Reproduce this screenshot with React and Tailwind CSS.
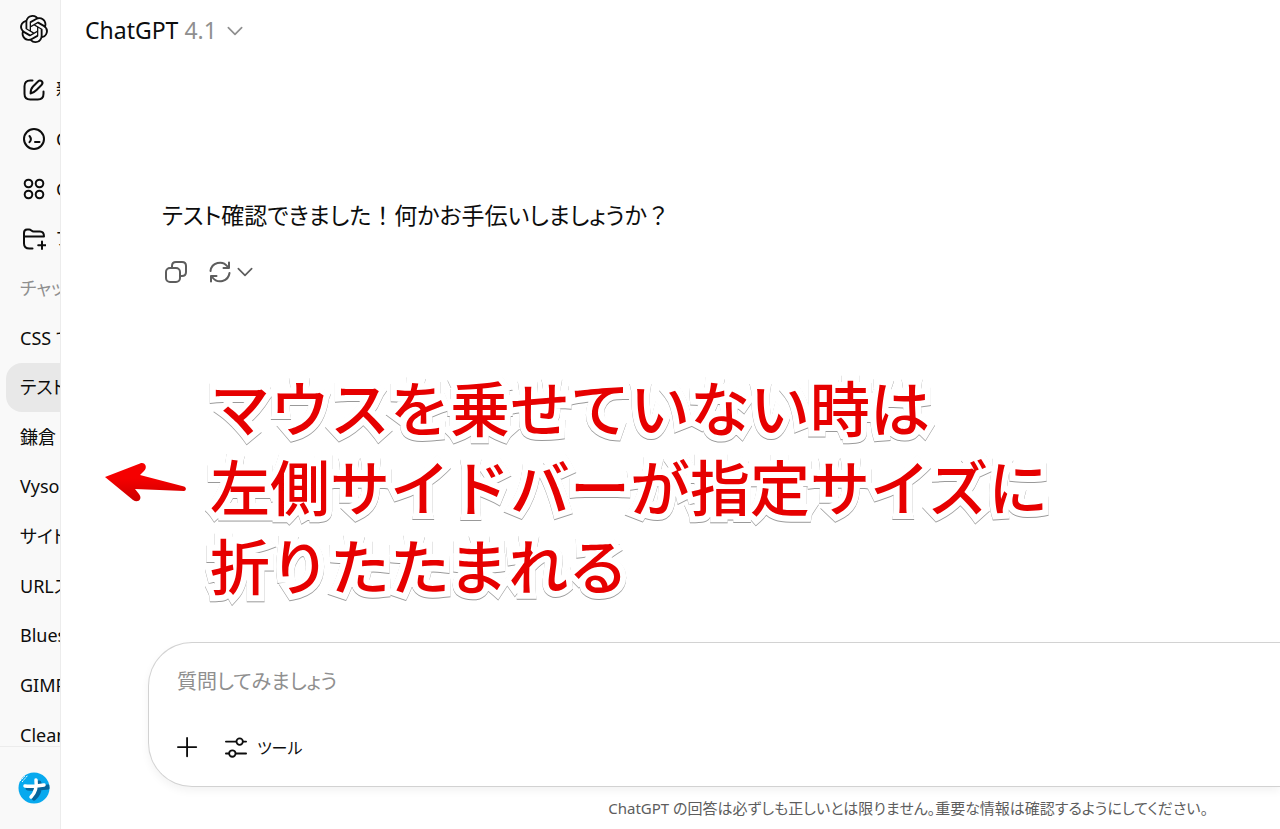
import React from "react";
import { SiOpenai } from "react-icons/si";

const navItems = [
  { label: "新しいチャット", icon: EditIcon },
  { label: "Codex", icon: CodexIcon },
  { label: "GPT", icon: AppsIcon },
  { label: "プロジェクト", icon: FolderPlusIcon },
];

const chats = [
  { title: "CSS で" },
  { title: "テスト確認", active: true },
  { title: "鎌倉 観光" },
  { title: "Vysor" },
  { title: "サイドバー" },
  { title: "URLスキーム" },
  { title: "Bluesky" },
  { title: "GIMP" },
  { title: "Cleaner" },
];

function Icon({ className = "size-6", strokeWidth = 2, children }) {
  return (
    <svg
      viewBox="0 0 24 24"
      fill="none"
      stroke="currentColor"
      strokeWidth={strokeWidth}
      strokeLinecap="round"
      strokeLinejoin="round"
      className={`shrink-0 ${className}`}
      aria-hidden="true"
    >
      {children}
    </svg>
  );
}

function EditIcon() {
  return (
    <Icon>
      <path d="M10.5 2.5H8.2C4.4 2.5 2.5 4.4 2.5 8.2v7.6c0 3.8 1.9 5.7 5.7 5.7h7.6c3.8 0 5.7-1.9 5.7-5.7V13.5" />
      <path d="M8.6 15.4c0-3.4.7-5.2 2.4-6.9l5-5c1.1-1.1 2.7-1.2 3.7-.2s.9 2.6-.2 3.7l-5 5c-1.7 1.7-3.1 3-5.9 3.4z" />
    </Icon>
  );
}

function CodexIcon() {
  return (
    <Icon>
      <circle cx="12" cy="12" r="10" />
      <path d="M7.5 9c2 2.2 2 4 0 6.2M13 15h4.5" />
    </Icon>
  );
}

function AppsIcon() {
  return (
    <Icon>
      <circle cx="6.5" cy="6.5" r="3.8" />
      <circle cx="17.5" cy="6.5" r="3.8" />
      <circle cx="6.5" cy="17.5" r="3.8" />
      <circle cx="17.5" cy="17.5" r="3.8" />
    </Icon>
  );
}

function FolderPlusIcon() {
  return (
    <Icon>
      <path d="M10.5 21.5h-3C4 21.5 2 20 2 16.500V6c0-2 1-3.500 3-3.500h2.200c1.800 0 2.500 2 4.300 2H18c3 0 4 1.500 4 5H2M20 14.500v7.500M16.200 18.200h7.600" />
    </Icon>
  );
}

function ChevronIcon() {
  return (
    <Icon className="size-4" strokeWidth={2.5}>
      <path d="M2 7l10 10L22 7" />
    </Icon>
  );
}

function Sidebar() {
  return (
    <aside className="flex w-[61px] shrink-0 flex-col overflow-hidden border-r border-[#ececec] bg-[#f9f9f9] text-[18px]">
      <a href="#" aria-label="ChatGPT" className="flex h-[65px] shrink-0 items-start pt-[15px] pl-5">
        <SiOpenai className="size-7" />
      </a>

      <nav className="min-h-0 flex-1 overflow-hidden">
        <ul className="flex h-[calc(100%+14px)] flex-col whitespace-nowrap">
          {navItems.map(({ label, icon: ItemIcon }) => (
            <li key={label} className="flex min-h-0 flex-1">
              <a href="#" className="flex items-center gap-[10px] pl-[22px]">
                <ItemIcon />
                {label}
              </a>
            </li>
          ))}
          <li className="flex min-h-0 flex-1 items-center pl-5 text-[#8f8f8f]">チャット</li>
          {chats.map(({ title, active }) => (
            <li key={title} className="flex min-h-0 flex-1 pl-[6px]">
              <a
                href="#"
                className={`flex w-64 shrink-0 items-center rounded-2xl pl-[14px] ${active ? "bg-[#e8e8e8]" : ""}`}
              >
                {title}
              </a>
            </li>
          ))}
        </ul>
      </nav>

      <div className="flex h-[83px] shrink-0 items-center border-t border-[#ececec] pl-[18px]">
        <button aria-label="アカウント">
          <Avatar />
        </button>
      </div>
    </aside>
  );
}

function Avatar() {
  return (
    <svg viewBox="0 0 32 32" className="size-8" aria-hidden="true">
      <defs>
        <clipPath id="disc">
          <circle cx="16" cy="16" r="15.5" />
        </clipPath>
      </defs>
      <circle cx="16" cy="16" r="15.5" fill="#08a9ee" />
      <path d="M2 9l5-5M4 10l6-7" stroke="#fff" strokeWidth="1" strokeDasharray="2 1" />
      <g fill="none" strokeLinecap="round" clipPath="url(#disc)">
        <path d="M10 16c6 1 13 0 20-1M21 11c1 7-1 12-5 15" stroke="#07659c" strokeWidth="5" />
        <path d="M7 14c6 1 13 0 19-1M18 8c1 7-1 13-5 17" stroke="#fff" strokeWidth="3.5" />
      </g>
    </svg>
  );
}

function Callout() {
  return (
    <div className="mt-[86px] flex items-start pl-[43px]">
      <svg viewBox="0 0 84 44" className="mt-[90px] h-11 w-[84px] shrink-0" aria-hidden="true">
        <defs>
          <linearGradient id="arrow" x1="0" y1="0" x2="0" y2="1">
            <stop offset="0.4" stopColor="#f50000" />
            <stop offset="1" stopColor="#cc0000" />
          </linearGradient>
        </defs>
        <path
          d="M1 17L36 3.5c5-2 8 4 4 7.5l-4 4 44 11.5c3 1 2 4.5 0 4.5l-49-2 4 5c4 5-1 9.5-6 6z"
          fill="url(#arrow)"
        />
      </svg>
      <p className="ml-[22px] text-[60px] leading-[79px] font-medium whitespace-nowrap text-[#e60000] drop-shadow-[0_1px_0_#999] [-webkit-text-stroke:12px_white] [font-feature-settings:normal] [paint-order:stroke_fill] [stroke-linejoin:round]">
        マウスを乗せていない時は
        <br />
        左側サイドバーが指定サイズに
        <br />
        折りたたまれる
      </p>
    </div>
  );
}

function Composer() {
  return (
    <form className="ml-[87px] flex h-[145px] flex-col justify-between rounded-l-[44px] border border-r-0 border-[#d2d2d2] bg-white px-7 pt-6 pb-6 shadow-[0_4px_8px_#0000000d]">
      <input
        type="text"
        aria-label="質問"
        placeholder="質問してみましょう"
        className="h-[30px] w-full text-[20px] outline-none placeholder:text-[#8f8f8f]"
      />
      <div className="flex items-center gap-[26px]">
        <button type="button" aria-label="追加">
          <Icon className="size-[22px]">
            <path d="M11 1v20M1 11h20" />
          </Icon>
        </button>
        <button type="button" className="flex items-center gap-[10px] text-[16px] leading-7">
          <Icon className="size-[22px]">
            <path d="M1 5h11M20 5h3M1 18h3M12 18h11" />
            <circle cx="16" cy="5" r="3.5" />
            <circle cx="8" cy="18" r="3.5" />
          </Icon>
          ツール
        </button>
      </div>
    </form>
  );
}

export default function App() {
  return (
    <div className="flex h-screen overflow-hidden bg-white font-['Noto_Sans','Noto_Sans_CJK_JP',sans-serif] text-[#0d0d0d] [font-feature-settings:'palt']">
      <Sidebar />
      <main className="flex min-w-0 flex-1 flex-col">
        <header className="flex h-[61px] shrink-0 items-center pl-6">
          <button className="flex items-center gap-[10px] text-[23px]">
            <span>
              ChatGPT <span className="text-[#8f8f8f]">4.1</span>
            </span>
            <span className="text-[#8f8f8f]">
              <ChevronIcon />
            </span>
          </button>
        </header>

        <section className="min-h-0 flex-1 pt-[136px]">
          <p className="pl-[101px] text-[23px] leading-9">
            テスト確認できました<span className="[font-feature-settings:normal]">！</span>
            何かお手伝いしましょうか<span className="[font-feature-settings:normal]">？</span>
          </p>
          <div className="mt-[27px] flex items-center pl-[103px] text-[#5d5d5d]">
            <button aria-label="コピー">
              <Icon>
                <rect x="2" y="8" width="14" height="14" rx="4" />
                <path d="M8 8V6c0-2.5 1.5-4 4-4h6c2.5 0 4 1.5 4 4v6c0 2.5-1.5 4-4 4h-2" />
              </Icon>
            </button>
            <button aria-label="再生成" className="ml-5 flex items-center gap-[5px]">
              <Icon>
                <path d="M2.5 11a9.5 9.5 0 0 1 17-4.5M21 2.5V8h-5.5M21.5 13a9.5 9.5 0 0 1-17 4.5M3 21.5V16h5.5" />
              </Icon>
              <ChevronIcon />
            </button>
          </div>
          <Callout />
        </section>

        <Composer />
        <p className="shrink-0 pt-[9px] pr-[72px] pb-[9px] text-right text-[15px] leading-6 text-[#5d5d5d]">
          ChatGPT の回答は必ずしも正しいとは限りません。重要な情報は確認するようにしてください。
        </p>
      </main>
    </div>
  );
}
